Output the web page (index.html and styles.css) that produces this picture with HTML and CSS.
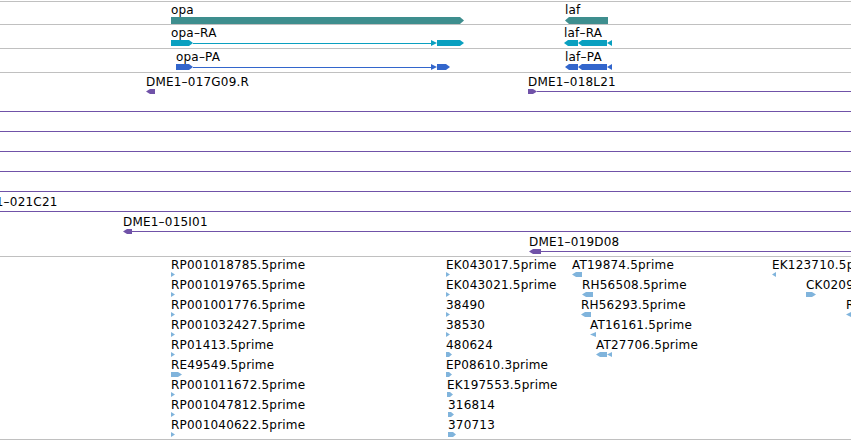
FILE: index.html
```html
<!DOCTYPE html>
<html lang="en">
<head>
  <meta charset="UTF-8">
  <title>Annotation tracks</title>
  <link rel="stylesheet" href="styles.css">
</head>
<body>
  <div class="track genes" id="genes"></div>
  <div class="track bacs" id="bacs"></div>
  <div class="track ests" id="ests"></div>

  <script>
    // glyph pieces, drawn in a box of height h
    function rarrow(x, w, h) {
      const t = w > 8 ? 4 : 3;
      return `<polygon points="${x},0 ${x + w - t},0 ${x + w},${h / 2} ${x + w - t},${h} ${x},${h}"/>`;
    }
    function larrow(x, w, h) {
      const t = w > 8 ? 4 : 3;
      return `<polygon points="${x},${h / 2} ${x + t},0 ${x + w},0 ${x + w},${h} ${x + t},${h}"/>`;
    }
    function rhead(x, w, h) {
      return `<polygon points="${x},0 ${x + w},${h / 2} ${x},${h}"/>`;
    }
    function lhead(x, w, h) {
      return `<polygon points="${x + w},0 ${x},${h / 2} ${x + w},${h}"/>`;
    }
    function intron(x, w, h) {
      return `<rect x="${x}" y="${Math.floor(h / 2)}" width="${w}" height="1"/>`;
    }

    const geneRows = [
      { cls: 'gene', h: 7, feats: [
        { x: 171, name: 'opa', w: 293, parts: rarrow(0, 293, 7) },
        { x: 565, name: 'laf', w: 43, parts: larrow(0, 43, 7) }
      ]},
      { cls: 'rna', h: 6, feats: [
        { x: 171, name: 'opa–RA', w: 293, parts: rarrow(0, 22, 6) + intron(22, 238, 6) + rhead(260, 6, 6) + rarrow(266, 27, 6) },
        { x: 564, name: 'laf–RA', w: 48, parts: larrow(0, 14, 6) + larrow(14, 29, 6) + lhead(43, 5, 6) }
      ]},
      { cls: 'pep', h: 6, feats: [
        { x: 176, name: 'opa–PA', w: 274, parts: rarrow(0, 17, 6) + intron(17, 238, 6) + rhead(255, 6, 6) + rarrow(261, 13, 6) },
        { x: 565, name: 'laf–PA', w: 47, parts: larrow(0, 13, 6) + larrow(13, 29, 6) + lhead(42, 5, 6) }
      ]}
    ];

    const open = { x: 0, name: '', tail: true };
    const bacRows = [
      [
        { x: 146, name: 'DME1–017G09.R', w: 9, parts: larrow(0, 9, 5) },
        { x: 528, name: 'DME1–018L21', w: 9, parts: rarrow(0, 9, 5), tail: true }
      ],
      [open], [open], [open], [open], [open],
      [{ x: -32, name: 'DME1–021C21', tail: true }],
      [{ x: 123, name: 'DME1–015I01', w: 9, parts: larrow(0, 9, 5), tail: true }],
      [{ x: 529, name: 'DME1–019D08', w: 12, parts: larrow(0, 12, 5), tail: true }]
    ];

    const tick = rhead(0, 4, 5);
    const estRows = [
      [
        { x: 171, name: 'RP001018785.5prime', w: 4, parts: tick },
        { x: 446, name: 'EK043017.5prime', w: 4, parts: tick },
        { x: 572, name: 'AT19874.5prime', w: 10, parts: larrow(0, 10, 5) },
        { x: 772, name: 'EK123710.5prime', w: 4, parts: lhead(0, 4, 5) }
      ],
      [
        { x: 171, name: 'RP001019765.5prime', w: 4, parts: tick },
        { x: 446, name: 'EK043021.5prime', w: 4, parts: tick },
        { x: 582, name: 'RH56508.5prime', w: 11, parts: larrow(0, 11, 5) },
        { x: 806, name: 'CK020903.5prime', w: 10, parts: rarrow(0, 10, 5) }
      ],
      [
        { x: 171, name: 'RP001001776.5prime', w: 4, parts: tick },
        { x: 446, name: '38490', w: 4, parts: tick },
        { x: 581, name: 'RH56293.5prime', w: 10, parts: larrow(0, 10, 5) },
        { x: 846, name: 'RH48237.5prime', w: 5, parts: lhead(0, 5, 5) }
      ],
      [
        { x: 171, name: 'RP001032427.5prime', w: 4, parts: tick },
        { x: 446, name: '38530', w: 4, parts: tick },
        { x: 590, name: 'AT16161.5prime', w: 6, parts: lhead(0, 6, 5) }
      ],
      [
        { x: 171, name: 'RP01413.5prime', w: 4, parts: tick },
        { x: 446, name: '480624', w: 6, parts: rarrow(0, 6, 5) },
        { x: 596, name: 'AT27706.5prime', w: 16, parts: larrow(0, 11, 5) + lhead(11, 5, 5) }
      ],
      [
        { x: 171, name: 'RE49549.5prime', w: 11, parts: rarrow(0, 11, 5) },
        { x: 446, name: 'EP08610.3prime', w: 6, parts: rarrow(0, 6, 5) }
      ],
      [
        { x: 171, name: 'RP001011672.5prime', w: 4, parts: tick },
        { x: 447, name: 'EK197553.5prime', w: 6, parts: rarrow(0, 6, 5) }
      ],
      [
        { x: 171, name: 'RP001047812.5prime', w: 4, parts: tick },
        { x: 448, name: '316814', w: 6, parts: rarrow(0, 6, 5) }
      ],
      [
        { x: 171, name: 'RP001040622.5prime', w: 4, parts: tick },
        { x: 448, name: '370713', w: 8, parts: rarrow(0, 8, 5) }
      ]
    ];

    function renderFeature(f, h) {
      const svg = f.w ? `<svg width="${f.w}" height="${h}">${f.parts}</svg>` : '';
      const tail = f.tail ? '<div class="tail"></div>' : '';
      return `<div class="feat${f.tail ? ' open' : ''}" style="left:${f.x}px">
          <div class="label">${f.name}</div>
          <div class="glyph">${svg}${tail}</div>
        </div>`;
    }

    function renderTrack(id, rows) {
      document.getElementById(id).innerHTML = rows.map(row =>
        `<div class="row ${row.cls || ''}">${row.feats.map(f => renderFeature(f, row.h)).join('')}</div>`
      ).join('');
    }

    renderTrack('genes', geneRows);
    renderTrack('bacs', bacRows.map(feats => ({ h: 5, feats })));
    renderTrack('ests', estRows.map(feats => ({ h: 5, feats })));
  </script>
</body>
</html>
```

FILE: styles.css
```css
body {
  margin: 0;
  width: 851px;
  height: 440px;
  overflow: hidden;
  background: white;
  font-family: 'DejaVu Sans', 'Liberation Sans', sans-serif;
  font-size: 12px;
  letter-spacing: 0.2px;
  color: black;
}

.track {
  border-bottom: 1px solid #c0c0c0;
}

.row {
  position: relative;
  height: 20px;
}

.feat {
  position: absolute;
  top: 1px;
  display: flex;
  flex-direction: column;
}

.feat.open {
  right: 0;
}

.label {
  height: 14px;
  line-height: 14px;
  white-space: nowrap;
}

.glyph {
  display: flex;
  align-items: center;
}

.glyph svg {
  display: block;
  flex: none;
}

/* gene models */
.genes {
  margin-top: 1px;
  border-top: 1px solid #c0c0c0;
  border-bottom: none;
}

.genes .row {
  height: 23px;
  border-bottom: 1px solid #c0c0c0;
}

.genes .row:first-child {
  height: 22px;
}

.gene svg { fill: #3e8e8e; }
.rna svg { fill: #0aa0c0; }
.pep svg { fill: #3366cc; }

/* bac ends */
.bacs {
  padding-bottom: 3px;
}

.bacs .feat {
  top: 2px;
}

.bacs .glyph {
  height: 5px;
}

.bacs svg {
  fill: #7052a8;
}

.tail {
  flex: 1;
  height: 1px;
  background: #7052a8;
}

/* est alignments */
.ests {
  padding-bottom: 2px;
}

.ests svg {
  fill: #80b4dc;
}
```
